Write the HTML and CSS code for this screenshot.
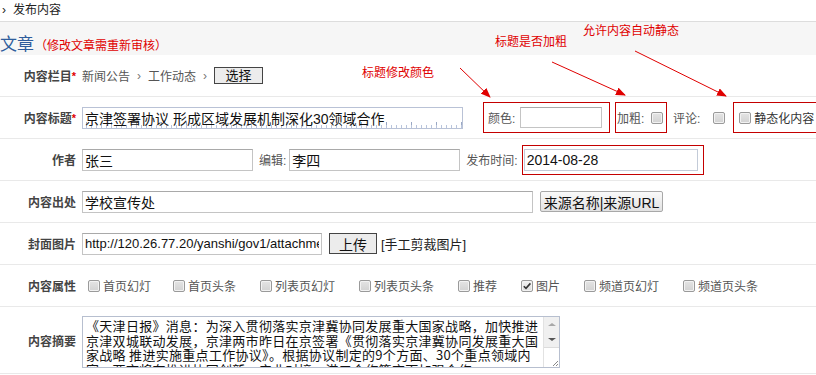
FILE: index.html
```html
<!DOCTYPE html>
<html lang="zh-CN">
<head>
    <meta charset="UTF-8">
    <meta name="viewport" content="width=device-width, initial-scale=1.0">
    <title>发布内容</title>
    <link rel="stylesheet" href="styles.css">
</head>
<body>
    <div class="crumb"><span class="crumb-arrow">›</span>发布内容</div>
    <div class="band">
        <span class="band-title">发布文章</span>
        <span class="band-note">（修改文章需重新审核）</span>
    </div>

    <div class="form">
        <div class="row">
            <div class="label">内容栏目<em>*</em></div>
            <div class="field">
                <span class="path">新闻公告</span><span class="sep">›</span><span class="path">工作动态</span><span class="sep">›</span>
                <button class="btn btn-dark btn-pick">选择</button>
            </div>
        </div>

        <div class="row">
            <div class="label">内容标题<em>*</em></div>
            <div class="field">
                <input class="input input-title" type="text" value="京津签署协议 形成区域发展机制深化30领域合作">
                <div class="mark mark-color">
                    <span class="txt">颜色:</span>
                    <input class="input input-color" type="text">
                </div>
                <div class="mark mark-bold">
                    <span class="txt">加粗:</span><span class="cb"></span>
                </div>
                <span class="txt txt-comment">评论:</span><span class="cb"></span>
                <div class="mark mark-static">
                    <span class="cb"></span><span class="txt">静态化内容</span>
                </div>
            </div>
        </div>

        <div class="row">
            <div class="label">作者</div>
            <div class="field">
                <input class="input input-name" type="text" value="张三">
                <span class="txt txt-pre">编辑:</span>
                <input class="input input-name input-editor" type="text" value="李四">
                <span class="txt txt-date">发布时间:</span>
                <div class="mark mark-date">
                    <input class="input input-date" type="text" value="2014-08-28">
                </div>
            </div>
        </div>

        <div class="row">
            <div class="label">内容出处</div>
            <div class="field">
                <input class="input input-source" type="text" value="学校宣传处">
                <button class="btn btn-light btn-source">来源名称|来源URL</button>
            </div>
        </div>

        <div class="row">
            <div class="label">封面图片</div>
            <div class="field">
                <input class="input input-cover" type="text" value="http://120.26.77.20/yanshi/gov1/attachment/2014/08/28/cover.jpg">
                <button class="btn btn-dark btn-upload">上传</button>
                <span class="crop">[手工剪裁图片]</span>
            </div>
        </div>

        <div class="row">
            <div class="label">内容属性</div>
            <div class="field options">
                <label class="opt"><span class="cb"></span>首页幻灯</label>
                <label class="opt"><span class="cb"></span>首页头条</label>
                <label class="opt"><span class="cb"></span>列表页幻灯</label>
                <label class="opt"><span class="cb"></span>列表页头条</label>
                <label class="opt"><span class="cb"></span>推荐</label>
                <label class="opt"><span class="cb checked"><svg viewBox="0 0 10 10" width="10" height="10"><path d="M1.8 5.2 L4 7.4 L8.4 2.4" fill="none" stroke="#333" stroke-width="1.6"/></svg></span>图片</label>
                <label class="opt"><span class="cb"></span>频道页幻灯</label>
                <label class="opt"><span class="cb"></span>频道页头条</label>
            </div>
        </div>

        <div class="row row-summary">
            <div class="label">内容摘要</div>
            <div class="field">
                <div class="summary-box">
                    <textarea class="summary">《天津日报》消息：为深入贯彻落实京津冀协同发展重大国家战略，加快推进
京津双城联动发展，京津两市昨日在京签署《贯彻落实京津冀协同发展重大国
家战略 推进实施重点工作协议》。根据协议制定的9个方面、30个重点领域内
容，两市将在推进协同创新、产业对接、港口合作等方面加强合作。</textarea>
                    <div class="scroll">
                        <span class="scroll-up"></span>
                        <span class="scroll-down"></span>
                        <span class="scroll-grip">
                            <svg width="8" height="8" viewBox="0 0 8 8"><path d="M7 2 L2 7 M7 5 L5 7" stroke="#888" stroke-width="1"/></svg>
                        </span>
                    </div>
                </div>
            </div>
        </div>
    </div>

    <!-- annotations drawn over the form -->
    <div class="note note-color">标题修改颜色</div>
    <div class="note note-bold">标题是否加粗</div>
    <div class="note note-static">允许内容自动静态</div>
    <svg class="arrows" width="816" height="375" viewBox="0 0 816 375">
        <defs>
            <marker id="head" markerWidth="10" markerHeight="8" refX="9" refY="4" orient="auto" markerUnits="userSpaceOnUse">
                <path d="M0 0 L10 4 L0 8 Z" fill="#e00000"/>
            </marker>
        </defs>
        <line x1="460" y1="68" x2="490" y2="97" stroke="#e00000" stroke-width="1" marker-end="url(#head)"/>
        <line x1="552" y1="62" x2="625" y2="95" stroke="#e00000" stroke-width="1" marker-end="url(#head)"/>
        <line x1="635" y1="51" x2="726" y2="96" stroke="#e00000" stroke-width="1" marker-end="url(#head)"/>
    </svg>
</body>
</html>
```

FILE: styles.css
```css
body {
    margin: 0;
    background-color: #ffffff;
    font-family: 'Liberation Sans', 'Noto Sans CJK SC', sans-serif;
    font-size: 12px;
    color: #333333;
    position: relative;
    width: 816px;
    height: 375px;
    overflow: hidden;
}
.crumb {
    height: 21px;
    line-height: 20px;
    border-bottom: 1px solid #dddddd;
    font-size: 12px;
    color: #222222;
}
.crumb-arrow {
    display: inline-block;
    margin: 0 7px 0 2px;
}
.band {
    height: 33px;
    box-sizing: border-box;
    padding-top: 13px;
    background-color: #f6f6f6;
    display: flex;
    align-items: baseline;
    white-space: nowrap;
}
.band-title {
    margin-left: -34px;
    font-size: 17px;
    line-height: 19px;
    color: #2f5d9c;
}
.band-note {
    margin-left: 1px;
    font-size: 12px;
    color: #e00000;
}
.form {
    width: 816px;
}
.row {
    height: 41px;
    border-bottom: 1px solid #e9e9e9;
    display: flex;
    align-items: center;
    white-space: nowrap;
}
.row-summary {
    height: 66px;
}
.label {
    width: 76px;
    flex-shrink: 0;
    text-align: right;
    font-weight: bold;
    font-size: 12px;
    color: #444444;
}
.label em {
    font-style: normal;
    color: #e00000;
    font-size: 11px;
    position: relative;
    top: -1px;
}
.field {
    margin-left: 6px;
    display: flex;
    align-items: center;
}
.path {
    color: #555555;
}
.sep {
    color: #777777;
    margin: 0 7px;
}
.btn {
    font-family: 'Liberation Sans', 'Noto Sans CJK SC', sans-serif;
    color: #111111;
    cursor: pointer;
    border-radius: 0;
    box-sizing: border-box;
}
.btn-dark {
    border: 1px solid #444444;
    background-color: #ececec;
}
.btn-light {
    border: 1px solid #a8a8a8;
    border-radius: 2px;
    background: linear-gradient(#fafafa, #e2e2e2);
}
.btn-pick {
    width: 49px;
    height: 17px;
    padding: 0;
    font-size: 13px;
    line-height: 14px;
}
.btn-source {
    margin-left: 7px;
    width: 123px;
    height: 21px;
    padding: 0;
    font-size: 14px;
}
.btn-upload {
    margin-left: 7px;
    width: 48px;
    height: 21px;
    padding: 0;
    font-size: 14px;
}
.crop {
    margin-left: 4px;
    font-size: 13px;
    color: #222222;
}
.input {
    box-sizing: border-box;
    height: 22px;
    padding: 0 2px;
    border: 1px solid #c4c4c4;
    border-top-color: #a9a9a9;
    background-color: #ffffff;
    font-family: 'Liberation Sans', 'Noto Sans CJK SC', sans-serif;
    font-size: 14px;
    color: #111111;
    outline: none;
}
.input-title {
    width: 381px;
    border-color: #b9c2d6;
    background-color: #ffffff;
    background-image:
        repeating-linear-gradient(90deg, #b8c4dc 0, #b8c4dc 1px, transparent 1px, transparent 5px),
        repeating-linear-gradient(90deg, #9aa8c4 0, #9aa8c4 1px, transparent 1px, transparent 25px);
    background-size: 100% 3px, 100% 6px;
    background-position: 3px 100%, 3px 100%;
    background-repeat: repeat-x;
}
.mark {
    box-sizing: border-box;
    height: 31px;
    border: 1px solid #c40000;
    display: flex;
    align-items: center;
}
.mark-color {
    margin-left: 20px;
    width: 127px;
    padding-left: 4px;
}
.input-color {
    margin-left: 5px;
    width: 82px;
    height: 21px;
}
.mark-bold {
    margin-left: 5px;
    width: 52px;
    padding-left: 1px;
}
.mark-bold .cb {
    margin-left: 7px;
}
.txt {
    color: #555555;
    font-size: 12px;
}
.txt-comment {
    margin-left: 6px;
    margin-right: 13px;
}
.mark-static {
    margin-left: 8px;
    width: 90px;
    padding-left: 5px;
}
.mark-static .txt {
    margin-left: 3px;
    color: #333333;
}
.input-name {
    width: 171px;
}
.txt-pre {
    margin-left: 6px;
    margin-right: 3px;
}
.txt-date {
    margin-left: 6px;
}
.mark-date {
    margin-left: 4px;
    width: 182px;
    height: 30px;
    padding-left: 1px;
}
.input-date {
    width: 174px;
    height: 22px;
    border-color: #c3cbd8;
}
.input-source {
    width: 451px;
}
.input-cover {
    width: 240px;
    height: 22px;
    font-size: 13px;
}
.cb {
    display: inline-flex;
    align-items: center;
    justify-content: center;
    box-sizing: border-box;
    width: 12px;
    height: 12px;
    border: 1px solid #9a9a9a;
    border-radius: 2px;
    background: linear-gradient(#e4e4e4, #d2d2d2);
    box-shadow: inset 0 0 0 1px #f2f2f2;
    flex-shrink: 0;
}
.cb.checked {
    background: linear-gradient(#f2f2f2, #dcdcdc);
}
.options {
    margin-left: 12px;
}
.opt {
    display: flex;
    align-items: center;
    margin-right: 24px;
    color: #555555;
    font-size: 12px;
}
.opt .cb {
    margin-right: 3px;
}
.opt:first-child {
    margin-right: 22px;
}
.summary-box {
    margin-top: 4px;
    width: 478px;
    height: 52px;
    box-sizing: border-box;
    border: 1px solid #b7bfcf;
    display: flex;
    background-color: #ffffff;
}
.summary {
    flex: 1;
    box-sizing: border-box;
    height: 50px;
    margin: 0;
    padding: 2px 2px 0 3px;
    border: none;
    font-family: 'Noto Sans CJK SC', sans-serif;
    font-size: 13px;
    letter-spacing: 0.3px;
    line-height: 14.5px;
    color: #111111;
    resize: none;
    overflow: hidden;
    white-space: pre;
    outline: none;
}
.scroll {
    width: 15px;
    display: flex;
    flex-direction: column;
    background-color: #f0f0f0;
    border-left: 1px solid #e2e2e2;
}
.scroll-up,
.scroll-down {
    height: 15px;
    display: flex;
    align-items: center;
    justify-content: center;
}
.scroll-up::before {
    content: "";
    border-left: 4px solid transparent;
    border-right: 4px solid transparent;
    border-bottom: 3px solid #a8a8a8;
}
.scroll-down::before {
    content: "";
    border-left: 4px solid transparent;
    border-right: 4px solid transparent;
    border-top: 3px solid #555555;
}
.scroll-grip {
    flex: 1;
    display: flex;
    align-items: flex-end;
    justify-content: flex-end;
    background-color: #ffffff;
    border-top: 1px solid #dcdcdc;
}
.note {
    position: absolute;
    font-size: 12px;
    color: #e00000;
    white-space: nowrap;
}
.note-color {
    left: 362px;
    top: 63px;
}
.note-bold {
    left: 495px;
    top: 32px;
}
.note-static {
    left: 583px;
    top: 21px;
}
.arrows {
    position: absolute;
    left: 0;
    top: 0;
    pointer-events: none;
}
```
